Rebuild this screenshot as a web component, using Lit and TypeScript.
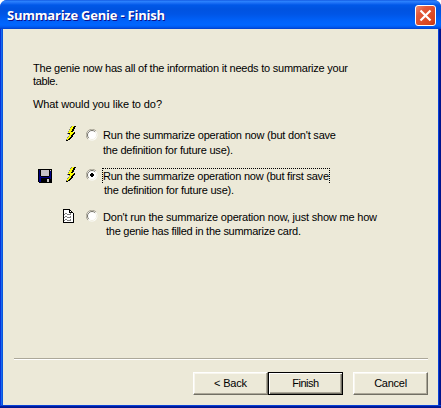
import { LitElement, html, svg, css } from "lit";
import { customElement, property } from "lit/decorators.js";

const COLORS: Record<string, string> = {
  k: "#000000", y: "#ffff00", w: "#ffffff", g: "#808080",
  s: "#c6c3c6", n: "#000084", o: "#848200",
};

const BOLT = [
  "......gyykk",
  ".....gyykk.",
  ".....yyykk.",
  "....gyykk..",
  "....yyykk..",
  "...gyykk...",
  "...yyyyyyk.",
  "..gkkyyykk.",
  "....gyykk..",
  "....yykk...",
  "...gyykk...",
  "..gyykk....",
  "..yykk.....",
  ".gykk......",
  ".kk........",
];
const DISK = [
  "kkkkkkkkkkkkkk",
  "knkssssssssksk",
  "knkssssssssknk",
  "knkssssssssknk",
  "knkssssssssknk",
  "knkssssssssknk",
  "knkssssssssknk",
  "knnkkkkkkkknnk",
  "knnnnnnnnnnnnk",
  "knnkkkkkkkkknk",
  "knnkkkkkksskkk",
  "knnkkkkkksskkk",
  "knnkkkkkksskkk",
  ".kkkkkkkkkkkkk",
];
const PAGE = [
  "kkkkkkk....",
  "kwwwwwkk...",
  "kwwwwwkwk..",
  "kwwwwwkkkk.",
  "kwggwwwgwwk",
  "kgwwggggwwk",
  "kwwwwwwwwwk",
  "kwggwwwgwwk",
  "kgwwggggwwk",
  "kwwwwwwwwwk",
  "kwggwwwgwwk",
  "kgwwggggwwk",
  "kwwwwwwwwwk",
  "kkkkkkkkkkk",
];

@customElement("pixel-icon")
class PixelIcon extends LitElement {
  @property({ attribute: false }) rows: string[] = [];
  static styles = css`
    :host { display: block; }
    svg { display: block; }
  `;
  render() {
    const w = this.rows[0]?.length ?? 0;
    const h = this.rows.length;
    return html`<svg width=${w} height=${h} viewBox="0 0 ${w} ${h}" shape-rendering="crispEdges">
      ${this.rows.flatMap((row, y) =>
        [...row].map((c, x) => c === "." ? null : svg`<rect x=${x} y=${y} width="1" height="1" fill=${COLORS[c]}></rect>`))}
    </svg>`;
  }
}

/* One line of text, tracked so that it fills the given advance width. */
@customElement("text-line")
class TextLine extends LitElement {
  @property() text = "";
  @property({ type: Number }) span = 0;
  static styles = css`
    :host { display: block; white-space: pre; }
    .t { display: inline-block; vertical-align: top; }
  `;
  render() {
    return html`<span class="t">${this.text}</span>`;
  }
  updated() {
    const el = this.renderRoot.querySelector(".t") as HTMLElement;
    el.style.letterSpacing = "0px";
    const natural = el.getBoundingClientRect().width;
    el.style.letterSpacing = `${(this.span - natural) / Math.max(1, this.text.length - 1)}px`;
  }
}

@customElement("app-root")
class AppRoot extends LitElement {
  static styles = css`
    :host { display: block; width: 441px; height: 408px; overflow: hidden; background: #fff;
      font: 11px/14px "Liberation Sans", Arial, sans-serif; color: #000; }
    * { box-sizing: border-box; }
    .window { width: 441px; height: 408px; display: flex; flex-direction: column;
      border-radius: 7px 7px 0 0; overflow: hidden;
      background: linear-gradient(90deg, #0831d9 1px, #166aee 1px, #166aee 2px, #0855dd 2px, #0855dd 438px,
        #0841d8 438px, #0841d8 439px, #001ea0 439px, #00138c 440px); }
    .title { height: 29px; flex: none; display: flex; justify-content: space-between;
      padding: 5px 5px 0 7px; color: #fff;
      font: bold 13px/20px "Open Sans", "Noto Sans", sans-serif; text-shadow: 1px 1px 0 #0f1089;
      background: linear-gradient(180deg, #0a4ad8 0, #2e86ff 1px, #1c6ff5 3px, #0058e8 5px, #0053e0 9px,
        #0055e6 14px, #0062fa 21px, #0066ff 25px, #005af0 27px, #003fcb 29px); }
    .client { flex: 1; margin: 0 3px; background: #ece9d8; display: flex; flex-direction: column; }
    .edge { flex: none; height: 3px; background: linear-gradient(#0841d8 1px, #001ea0 1px, #00138c 3px); }
    .close { display: block; }
    .intro { padding: 32px 0 0 30px; height: 82px; }
    .intro text-line { height: 13px; }
    .ask { margin-top: 10px; }
    .options { height: 247px; padding-top: 15px; }
    .option { display: grid; grid-template-columns: 35px 25px 24px 1fr; height: 41px; padding-top: 3px; }
    .disk { margin: -1px 0 0 35px; }
    .bolt { margin: -3px 0 0 27px; }
    .page { margin: -2px 0 0 25px; }
    .radio { margin: -1px 0 0 23px; display: block; }
    .first .radio { margin-top: 0; }
    .copy { margin: -1px 0 0 16px; position: relative; }
    .copy text-line { height: 14px; }
    .first .copy text-line { height: 15px; }
    .focus { position: absolute; left: -1px; top: -1px; width: 228px; height: 15px;
      border: 1px dotted #000; border-bottom: 0; }
    .shift1 { margin-left: 1px; }
    .shift3 { margin-left: 3px; }
    .rule { height: 2px; flex: none; margin: 0 10px 0 11px; background: linear-gradient(#aca899 50%, #fff 50%); }
    .buttons { display: flex; justify-content: flex-end; padding: 12px 10px 0 0; }
    .btn { width: 75px; height: 23px; padding: 3px 0 0; display: flex; justify-content: center;
      background: #ece9d8; border: 1px solid; border-color: #fff #716f64 #716f64 #fff;
      box-shadow: inset -1px -1px #aca899, inset 1px 1px #f8f6ee; }
    .default { border-color: #000; box-shadow: inset 1px 1px #fff, inset -1px -1px #716f64, inset -2px -2px #aca899; }
    .last { margin-left: 10px; }
  `;

  radio(on = false) {
    return html`<svg class="radio" width="12" height="12" viewBox="0 0 12 12">
      <circle cx="6" cy="6" r="5.5" fill="#fff"></circle>
      <path d="M1.9 10.1A5.5 5.5 0 0 1 10.1 1.9" fill="none" stroke="#aca899"></path>
      <path d="M2.8 9.2A4.5 4.5 0 0 1 9.2 2.8" fill="none" stroke="#716f64"></path>
      <path d="M9.2 2.8A4.5 4.5 0 0 1 2.8 9.2" fill="none" stroke="#f1efe2"></path>
      ${on ? svg`<path d="M5 4h2v1h1v2h-1v1h-2v-1h-1v-2h1z" fill="#000" shape-rendering="crispEdges"></path>` : null}
    </svg>`;
  }

  render() {
    return html`<div class="window">
      <div class="title">
        <text-line text="Summarize Genie - Finish" span="158"></text-line>
        <svg class="close" width="21" height="21" viewBox="0 0 21 21">
          <defs><linearGradient id="red" x1="0" y1="0" x2="1" y2="1">
            <stop offset="0" stop-color="#ee9078"></stop><stop offset=".3" stop-color="#e2593a"></stop>
            <stop offset=".8" stop-color="#d9441c"></stop><stop offset="1" stop-color="#b83210"></stop>
          </linearGradient></defs>
          <rect x=".5" y=".5" width="20" height="20" rx="2.5" fill="url(#red)" stroke="#fff"></rect>
          <path d="M5.5 5.5l10 10M15.5 5.5l-10 10" stroke="#fff" stroke-width="2.2"></path>
        </svg>
      </div>
      <div class="client">
        <div class="intro">
          <text-line text="The genie now has all of the information it needs to summarize your" span="315"></text-line>
          <text-line text="table." span="25"></text-line>
          <text-line class="ask" text="What would you like to do?" span="129"></text-line>
        </div>
        <div class="options">
          <div class="option first">
            <span></span><pixel-icon class="bolt" .rows=${BOLT}></pixel-icon>${this.radio()}
            <div class="copy">
              <text-line text="Run the summarize operation now (but don't save" span="233"></text-line>
              <text-line text="the definition for future use)." span="130"></text-line>
            </div>
          </div>
          <div class="option chosen">
            <pixel-icon class="disk" .rows=${DISK}></pixel-icon><pixel-icon class="bolt" .rows=${BOLT}></pixel-icon>${this.radio(true)}
            <div class="copy">
              <div class="focus"></div>
              <text-line text="Run the summarize operation now (but first save" span="226"></text-line>
              <text-line class="shift1" text="the definition for future use)." span="130"></text-line>
            </div>
          </div>
          <div class="option">
            <span></span><pixel-icon class="page" .rows=${PAGE}></pixel-icon>${this.radio()}
            <div class="copy">
              <text-line text="Don't run the summarize operation now, just show me how" span="274"></text-line>
              <text-line class="shift3" text="the genie has filled in the summarize card." span="195"></text-line>
            </div>
          </div>
        </div>
        <div class="rule"></div>
        <div class="buttons">
          <div class="btn"><text-line text="&lt; Back" span="33"></text-line></div>
          <div class="btn default"><text-line text="Finish" span="27"></text-line></div>
          <div class="btn last"><text-line text="Cancel" span="33"></text-line></div>
        </div>
      </div>
      <div class="edge"></div>
    </div>`;
  }
}
